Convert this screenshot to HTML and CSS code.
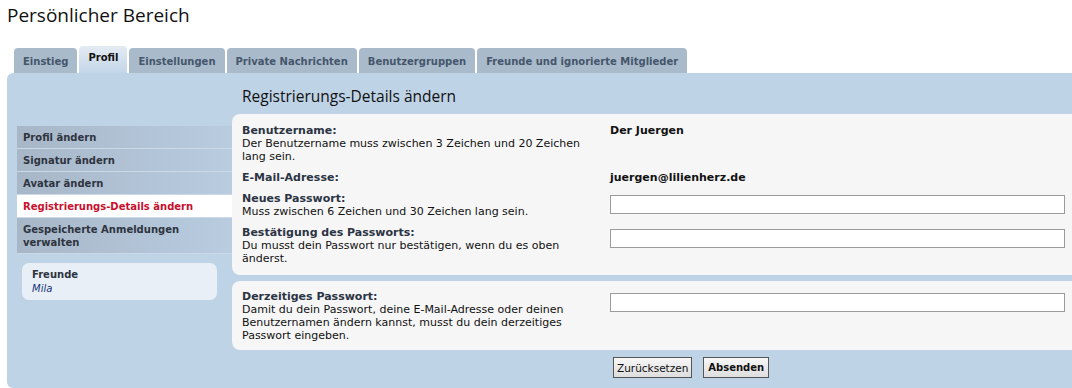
FILE: index.html
```html
<!DOCTYPE html>
<html lang="de">

<head>
    <meta charset="UTF-8">
    <meta name="viewport" content="width=device-width, initial-scale=1.0">
    <title>Persönlicher Bereich</title>
    <link rel="stylesheet" href="styles.css">
</head>

<body>
    <h1 class="page-title">Persönlicher Bereich</h1>

    <ul class="tabs">
        <li><a href="#">Einstieg</a></li>
        <li class="active"><a href="#">Profil</a></li>
        <li><a href="#">Einstellungen</a></li>
        <li><a href="#">Private Nachrichten</a></li>
        <li><a href="#">Benutzergruppen</a></li>
        <li><a href="#">Freunde und ignorierte Mitglieder</a></li>
    </ul>

    <div class="panel">
        <div class="sidebar">
            <ul class="side-menu">
                <li><a href="#">Profil ändern</a></li>
                <li><a href="#">Signatur ändern</a></li>
                <li><a href="#">Avatar ändern</a></li>
                <li class="active"><a href="#">Registrierungs-Details ändern</a></li>
                <li><a href="#">Gespeicherte Anmeldungen verwalten</a></li>
            </ul>

            <div class="friends">
                <strong>Freunde</strong>
                <a href="#">Mila</a>
            </div>
        </div>

        <div class="content">
            <h2>Registrierungs-Details ändern</h2>

            <form>
                <div class="box">
                    <div class="field">
                        <div class="label">
                            <strong>Benutzername:</strong>
                            <span>Der Benutzername muss zwischen 3 Zeichen und 20 Zeichen lang sein.</span>
                        </div>
                        <div class="value"><b>Der Juergen</b></div>
                    </div>
                    <div class="field">
                        <div class="label"><strong>E-Mail-Adresse:</strong></div>
                        <div class="value"><b>juergen@lilienherz.de</b></div>
                    </div>
                    <div class="field">
                        <div class="label">
                            <strong>Neues Passwort:</strong>
                            <span>Muss zwischen 6 Zeichen und 30 Zeichen lang sein.</span>
                        </div>
                        <div class="value"><input type="password"></div>
                    </div>
                    <div class="field">
                        <div class="label">
                            <strong>Bestätigung des Passworts:</strong>
                            <span>Du musst dein Passwort nur bestätigen, wenn du es oben änderst.</span>
                        </div>
                        <div class="value"><input type="password"></div>
                    </div>
                </div>

                <div class="box box-current">
                    <div class="field">
                        <div class="label">
                            <strong>Derzeitiges Passwort:</strong>
                            <span>Damit du dein Passwort, deine E-Mail-Adresse oder deinen Benutzernamen ändern kannst, musst du dein derzeitiges Passwort eingeben.</span>
                        </div>
                        <div class="value"><input type="password"></div>
                    </div>
                </div>

                <div class="buttons">
                    <button type="reset">Zurücksetzen</button>
                    <button type="submit" class="primary">Absenden</button>
                </div>
            </form>
        </div>
    </div>
</body>

</html>
```

FILE: styles.css
```css
body {
    margin: 0;
    padding: 0 0 0 7px;
    background-color: white;
    color: #111;
    font-family: "DejaVu Sans", Verdana, sans-serif;
    font-size: 11px;
    line-height: 13px;
    overflow: hidden;
}

.page-title {
    margin: 4px 0 20px;
    font-family: "Open Sans", "DejaVu Sans", sans-serif;
    font-size: 19px;
    line-height: 22px;
    font-weight: normal;
    color: #111;
}

/* tabs */

.tabs {
    list-style: none;
    margin: 0;
    padding: 0 0 0 7px;
    display: flex;
    align-items: flex-end;
    gap: 2px;
}

.tabs a {
    display: block;
    height: 25px;
    box-sizing: border-box;
    padding: 7px 9px 0;
    background-color: #a9bacb;
    border-radius: 4px 4px 0 0;
    color: #45566b;
    font-size: 10px;
    font-weight: bold;
    text-decoration: none;
}

.tabs .active a {
    height: 27px;
    padding-top: 5px;
    background: linear-gradient(#e3ebf3, #c3d6e8);
    color: #111;
}

/* main panel */

.panel {
    display: flex;
    background-color: #bfd3e6;
    border-radius: 6px 0 0 6px;
    padding-bottom: 10px;
}

.sidebar {
    width: 215px;
    flex-shrink: 0;
    padding: 53px 0 0 10px;
}

.side-menu {
    list-style: none;
    margin: 0;
    padding: 0;
}

.side-menu li {
    border-bottom: 1px solid #ccdae8;
}

.side-menu a {
    display: block;
    padding: 5px 6px 4px;
    background: linear-gradient(to right, #a7b7c8, #b9cce0);
    color: #2e3440;
    font-size: 10px;
    font-weight: bold;
    text-decoration: none;
}

.side-menu .active a {
    background: white;
    color: #c8102e;
}

.friends {
    margin: 9px 15px 0 5px;
    padding: 5px 10px 4px;
    background-color: #e9eff6;
    border-radius: 7px;
    font-size: 10px;
    line-height: 14px;
}

.friends strong,
.friends a {
    display: block;
}

.friends strong {
    color: #2e3440;
}

.friends a {
    color: #14337a;
    font-style: italic;
    text-decoration: none;
}

/* content */

.content {
    flex: 1;
    padding-top: 13px;
}

.content h2 {
    margin: 0 0 8px 10px;
    font-family: "Open Sans", "DejaVu Sans", sans-serif;
    font-size: 15.5px;
    line-height: 20px;
    font-weight: normal;
    color: #111;
}

.box {
    display: flex;
    flex-direction: column;
    gap: 8px;
    background-color: #f6f6f6;
    border-radius: 8px 0 0 8px;
    padding: 10px 7px 10px 10px;
}

.box-current {
    margin-top: 6px;
    padding-top: 9px;
    padding-bottom: 8px;
}

.field {
    display: grid;
    grid-template-columns: 368px 1fr;
}

.label {
    padding-right: 10px;
}

.label strong {
    display: block;
    color: #2c3444;
}

.value b {
    color: #111;
}

.value input {
    display: block;
    width: 100%;
    height: 19px;
    margin: 3px 0 0;
    box-sizing: border-box;
    border: 1px solid #9b9b9b;
    background-color: white;
}

.buttons {
    display: flex;
    gap: 11px;
    padding: 7px 0 0 381px;
}

.buttons button {
    height: 21px;
    padding: 0 3px;
    border: 1px solid #555;
    border-radius: 0;
    background: linear-gradient(#f7f7f7, #dedede);
    color: #111;
    font-family: "DejaVu Sans", Verdana, sans-serif;
    font-size: 10.5px;
}

.buttons .primary {
    font-weight: bold;
    font-size: 10px;
    padding: 0 4px;
}
```
